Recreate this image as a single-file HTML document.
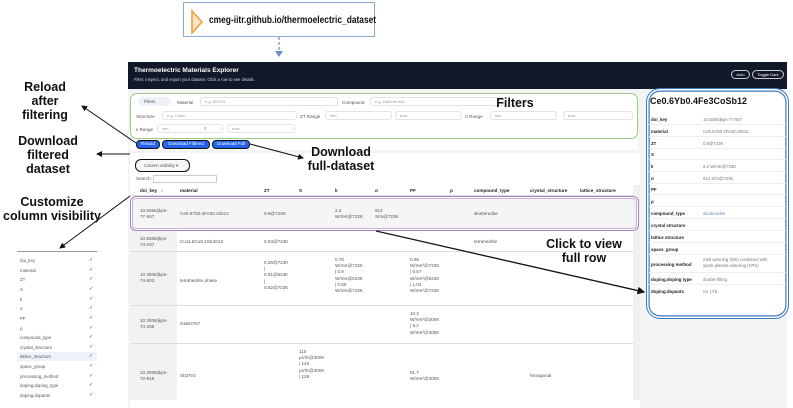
<!DOCTYPE html>
<html><head><meta charset="utf-8"><style>
*{margin:0;padding:0;box-sizing:border-box}
body{width:793px;height:408px;background:#fff;font-family:"Liberation Sans",sans-serif;position:relative;overflow:hidden;color:#333}
.a{position:absolute;white-space:nowrap}
.lbl{position:absolute;font-weight:bold;color:#111;text-align:center;line-height:14px;font-size:12.5px}
.t{font-size:4.6px;color:#555}
.in{position:absolute;border:1px solid #e3e3e3;border-radius:3px;background:#fff;height:9px;font-size:4px;color:#999;padding:1px 4px;line-height:6px}
.btn{position:absolute;background:#2563eb;color:#fff;font-size:4.4px;border:1.3px solid #111;border-radius:4px;height:9px;line-height:6.5px;text-align:center}
.cell{position:absolute;font-size:4.6px;color:#555;line-height:6.2px}
.rl{position:absolute;left:651px;font-size:4.4px;font-weight:bold;color:#222}
.rv{position:absolute;left:703px;font-size:4.3px;color:#777;line-height:6px}
.rs{position:absolute;left:649px;width:137px;height:1px;background:#eee}
.li{position:absolute;left:20px;font-size:4.4px;color:#555}
.ck{position:absolute;left:89px;font-size:5px;color:#444}
</style></head><body>

<!-- URL box -->
<div class="a" style="left:183px;top:2px;width:192px;height:35px;border:1px solid #8fa9d6;background:#fff"></div>
<svg class="a" style="left:190px;top:9px" width="14" height="26"><polygon points="2,2 12,13 2,24" fill="#fde3c8" stroke="#f0a030" stroke-width="1.5"/></svg>
<div class="a" style="left:209px;top:14px;font-size:10.5px;font-weight:bold;color:#111;transform:scaleX(0.8);transform-origin:0 0">cmeg-iitr.github.io/thermoelectric_dataset</div>
<svg class="a" style="left:273px;top:37px" width="12" height="22"><line x1="6" y1="0" x2="6" y2="15" stroke="#6a8ac8" stroke-width="1.2" stroke-dasharray="3,2"/><polygon points="2,14 10,14 6,20" fill="#6a8ac8"/></svg>

<!-- app header -->
<div class="a" style="left:128px;top:62px;width:659px;height:27px;background:#111827"></div>
<div class="a" style="left:134px;top:67px;font-size:6.5px;font-weight:bold;color:#fff">Thermoelectric Materials Explorer</div>
<div class="a" style="left:134px;top:77px;font-size:4.2px;color:#cbd5e1">Filter, inspect, and export your dataset. Click a row to see details.</div>
<div class="a" style="left:731px;top:70px;width:19px;height:9px;border:1px solid #ccc;border-radius:5px;font-size:4px;color:#fff;text-align:center;line-height:7px">Auto</div>
<div class="a" style="left:752px;top:70px;width:32px;height:9px;border:1px solid #ccc;border-radius:5px;font-size:4px;color:#fff;text-align:center;line-height:7px">Toggle Dark</div>

<div class="a" style="left:128px;top:89px;width:515px;height:319px;background:#f3f4f6"></div>
<div class="a" style="left:640px;top:89px;width:147px;height:319px;background:#f3f4f6"></div>

<!-- filters panel -->
<div class="a" style="left:130px;top:93px;width:508px;height:46px;background:#fff;border:1.5px solid #9bc98a;border-radius:7px"></div>
<div class="a" style="left:138px;top:97px;width:33px;height:9px;background:#eef2f8;border-radius:5px;font-size:4.2px;color:#555;padding:2px 6px">Filters</div>
<div class="a t" style="left:177px;top:100px">Material</div>
<div class="in" style="left:200px;top:97px;width:138px">e.g. Bi2Te3</div>
<div class="a t" style="left:342px;top:100px">Compound</div>
<div class="in" style="left:370px;top:97px;width:134px">e.g. Half-Heusler</div>
<div class="a t" style="left:136px;top:114px">Structure</div>
<div class="in" style="left:162px;top:111px;width:135px">e.g. Cubic</div>
<div class="a t" style="left:300px;top:114px">ZT Range</div>
<div class="in" style="left:325px;top:111px;width:67px">min</div>
<div class="in" style="left:395px;top:111px;width:67px">max</div>
<div class="a t" style="left:465px;top:114px">σ Range</div>
<div class="in" style="left:490px;top:111px;width:67px">min</div>
<div class="in" style="left:563px;top:111px;width:70px">max</div>
<div class="a t" style="left:136px;top:127px">κ Range</div>
<div class="in" style="left:157px;top:124px;width:66px">min <span style="margin-left:34px;color:#777">⇕</span></div>
<div class="in" style="left:227px;top:124px;width:68px">max</div>

<div class="a" style="left:130px;top:139px;width:508px;height:11px;background:#fff"></div>
<div class="btn" style="left:136px;top:140px;width:24px">Reload</div>
<div class="btn" style="left:162px;top:140px;width:48px">Download Filtered</div>
<div class="btn" style="left:212px;top:140px;width:38px">Download Full</div>

<div class="a" style="left:130px;top:153px;width:510px;height:255px;background:#fff"></div>
<div class="a" style="left:135px;top:159px;width:55px;height:13px;border:1.3px solid #111;border-radius:6px;background:#f7f7f7;font-size:4.3px;color:#555;padding:3px 0 0 8px">Column visibility ▾</div>
<div class="a t" style="left:136px;top:176px">Search:</div>
<div class="a" style="left:153px;top:175px;width:64px;height:8px;border:1px solid #ccc;background:#fff"></div>

<div class="a" style="left:130px;top:185px;width:503px;height:11px;border-bottom:1px solid #ddd"></div>
<div class="cell" style="left:140px;top:188px;font-weight:bold;color:#222">doi_key &nbsp; ↕</div>
<div class="cell" style="left:180px;top:188px;font-weight:bold;color:#222">material</div>
<div class="cell" style="left:264px;top:188px;font-weight:bold;color:#222">ZT</div>
<div class="cell" style="left:299px;top:188px;font-weight:bold;color:#222">S</div>
<div class="cell" style="left:335px;top:188px;font-weight:bold;color:#222">k</div>
<div class="cell" style="left:375px;top:188px;font-weight:bold;color:#222">σ</div>
<div class="cell" style="left:410px;top:188px;font-weight:bold;color:#222">PF</div>
<div class="cell" style="left:450px;top:188px;font-weight:bold;color:#222">ρ</div>
<div class="cell" style="left:474px;top:188px;font-weight:bold;color:#222">compound_type</div>
<div class="cell" style="left:530px;top:188px;font-weight:bold;color:#222">crystal_structure</div>
<div class="cell" style="left:580px;top:188px;font-weight:bold;color:#222">lattice_structure</div>

<div class="a" style="left:130px;top:197px;width:47px;height:211px;background:#f2f2f2"></div>
<div class="a" style="left:130px;top:197px;width:503px;height:34px;background:#f5f5f5"></div>
<div class="a" style="left:130px;top:251px;width:503px;height:1px;background:#ddd"></div>
<div class="a" style="left:130px;top:305px;width:503px;height:1px;background:#ddd"></div>
<div class="a" style="left:130px;top:343px;width:503px;height:1px;background:#ddd"></div>
<div class="a" style="left:130px;top:400px;width:510px;height:8px;background:#fff"></div>

<div class="cell" style="left:140px;top:208px">10.5555/jkps-<br>77-567</div>
<div class="cell" style="left:180px;top:211px">Ce0.6Yb0.4Fe3CoSb12</div>
<div class="cell" style="left:264px;top:211px">0.9@723K</div>
<div class="cell" style="left:335px;top:208px">2.2<br>W/mK@723K</div>
<div class="cell" style="left:375px;top:208px">912<br>S/m@723K</div>
<div class="cell" style="left:474px;top:211px">skutterudite</div>

<div class="cell" style="left:140px;top:236px">10.5555/jkps-<br>74-167</div>
<div class="cell" style="left:180px;top:239px">Cu11.8Co0.2Sb4S13</div>
<div class="cell" style="left:264px;top:239px">0.54@723K</div>
<div class="cell" style="left:474px;top:239px">tetrahedrite</div>

<div class="cell" style="left:140px;top:272px">10.3938/jkps-<br>74-503</div>
<div class="cell" style="left:180px;top:278px">tetrahedrite phase</div>
<div class="cell" style="left:264px;top:260px">0.26@723K<br>|<br>0.61@523K<br>|<br>0.52@723K</div>
<div class="cell" style="left:335px;top:257px">0.76<br>W/mK@723K<br>| 0.8<br>W/mK@523K<br>| 0.85<br>W/mK@723K</div>
<div class="cell" style="left:410px;top:257px">0.95<br>W/mK²@723K<br>| 0.57<br>W/mK²@523K<br>| 1.04<br>W/mK²@723K</div>

<div class="cell" style="left:140px;top:318px">10.3938/jkps-<br>74-255</div>
<div class="cell" style="left:180px;top:321px">GeBi4Te7</div>
<div class="cell" style="left:410px;top:311px">10.2<br>W/mK²@300K<br>| 8.2<br>W/mK²@300K</div>

<div class="cell" style="left:140px;top:370px">10.3938/jkps-<br>72-915</div>
<div class="cell" style="left:180px;top:373px">Sb2Te3</div>
<div class="cell" style="left:299px;top:349px">110<br>μV/K@300K<br>| 146<br>μV/K@300K<br>| 126</div>
<div class="cell" style="left:410px;top:370px">81.7<br>W/mK²@300K</div>
<div class="cell" style="left:530px;top:373px">hexagonal</div>

<div class="a" style="left:633px;top:185px;width:7px;height:215px;background:#f0f0f0"></div>

<div class="a" style="left:130px;top:196px;width:509px;height:35px;border:1.5px solid #a685c4;border-radius:6px;box-shadow:inset 0 0 0 1px #fff,inset 0 0 0 2px #c9b3dc"></div>

<div class="a" style="left:646px;top:88px;width:143px;height:231px;background:#fff;border:1.5px solid #3a7ac0;border-radius:14px;box-shadow:inset 0 0 0 1.5px #fff,inset 0 0 0 2.7px #3a7ac0"></div>
<div class="a" style="left:650px;top:96px;font-size:9px;font-weight:bold;color:#111">Ce0.6Yb0.4Fe3CoSb12</div>
<div class="rl" style="top:117px">doi_key</div><div class="rv" style="top:117px">10.5555/jkps-77-567</div><div class="rs" style="top:124px"></div>
<div class="rl" style="top:129px">material</div><div class="rv" style="top:129px">Ce0.6Yb0.4Fe3CoSb12</div><div class="rs" style="top:136px"></div>
<div class="rl" style="top:141px">ZT</div><div class="rv" style="top:141px">0.9@723K</div><div class="rs" style="top:148px"></div>
<div class="rl" style="top:152px">S</div><div class="rs" style="top:159px"></div>
<div class="rl" style="top:164px">k</div><div class="rv" style="top:164px">2.2 W/mK@723K</div><div class="rs" style="top:171px"></div>
<div class="rl" style="top:176px">σ</div><div class="rv" style="top:176px">912 S/m@723K</div><div class="rs" style="top:183px"></div>
<div class="rl" style="top:187px">PF</div><div class="rs" style="top:194px"></div>
<div class="rl" style="top:199px">ρ</div><div class="rs" style="top:206px"></div>
<div class="rl" style="top:211px">compound_type</div><div class="rv" style="top:211px;color:#6b8fc0">skutterudite</div><div class="rs" style="top:218px"></div>
<div class="rl" style="top:223px">crystal structure</div><div class="rs" style="top:230px"></div>
<div class="rl" style="top:235px">lattice structure</div><div class="rs" style="top:242px"></div>
<div class="rl" style="top:247px">space_group</div><div class="rs" style="top:254px"></div>
<div class="rl" style="top:262px">processing method</div><div class="rv" style="top:257px">melt spinning (MS) combined with<br>spark plasma sintering (SPS)</div><div class="rs" style="top:272px"></div>
<div class="rl" style="top:277px">doping.doping type</div><div class="rv" style="top:277px">double filling</div><div class="rs" style="top:284px"></div>
<div class="rl" style="top:289px">doping.dopants</div><div class="rv" style="top:289px">Ce | Yb</div>

<div class="lbl" style="left:5px;top:80px;width:80px">Reload<br>after<br>filtering</div>
<div class="lbl" style="left:8px;top:134px;width:80px">Download<br>filtered<br>dataset</div>
<div class="lbl" style="left:0px;top:195px;width:104px">Customize<br>column visibility</div>
<div class="lbl" style="left:490px;top:96px;width:50px">Filters</div>
<div class="lbl" style="left:300px;top:145px;width:82px">Download<br>full-dataset</div>
<div class="lbl" style="left:545px;top:237px;width:78px">Click to view<br>full row</div>

<div class="a" style="left:17px;top:251px;width:80px;height:1px;background:#999"></div>
<div class="a" style="left:17px;top:352px;width:80px;height:9px;background:#eef2fa"></div>
<div class="li" style="top:258px">doi_key</div><div class="ck" style="top:257px">✓</div>
<div class="li" style="top:268px">material</div><div class="ck" style="top:267px">✓</div>
<div class="li" style="top:277px">ZT</div><div class="ck" style="top:276px">✓</div>
<div class="li" style="top:287px">S</div><div class="ck" style="top:286px">✓</div>
<div class="li" style="top:297px">k</div><div class="ck" style="top:296px">✓</div>
<div class="li" style="top:306px">σ</div><div class="ck" style="top:305px">✓</div>
<div class="li" style="top:316px">PF</div><div class="ck" style="top:315px">✓</div>
<div class="li" style="top:326px">ρ</div><div class="ck" style="top:325px">✓</div>
<div class="li" style="top:335px">compound_type</div><div class="ck" style="top:334px">✓</div>
<div class="li" style="top:345px">crystal_structure</div><div class="ck" style="top:344px">✓</div>
<div class="li" style="top:354px">lattice_structure</div><div class="ck" style="top:353px">✓</div>
<div class="li" style="top:364px">space_group</div><div class="ck" style="top:363px">✓</div>
<div class="li" style="top:374px">processing_method</div><div class="ck" style="top:373px">✓</div>
<div class="li" style="top:383px">doping.doping_type</div><div class="ck" style="top:382px">✓</div>
<div class="li" style="top:393px">doping.dopants</div><div class="ck" style="top:392px">✓</div>

<svg class="a" style="left:0;top:0" width="793" height="408">
<defs><marker id="ah" markerWidth="6" markerHeight="6" refX="5" refY="3" orient="auto"><polygon points="0,0 6,3 0,6" fill="#111"/></marker></defs>
<g stroke="#111" stroke-width="1" fill="none" marker-end="url(#ah)">
<line x1="136" y1="143" x2="82" y2="106"/>
<line x1="130" y1="154" x2="97" y2="154"/>
<line x1="130" y1="196" x2="60" y2="248"/>
<line x1="250" y1="144" x2="303" y2="158"/>
<line x1="376" y1="231" x2="644" y2="292" stroke-width="1.3"/>
</g></svg>
</body></html>
